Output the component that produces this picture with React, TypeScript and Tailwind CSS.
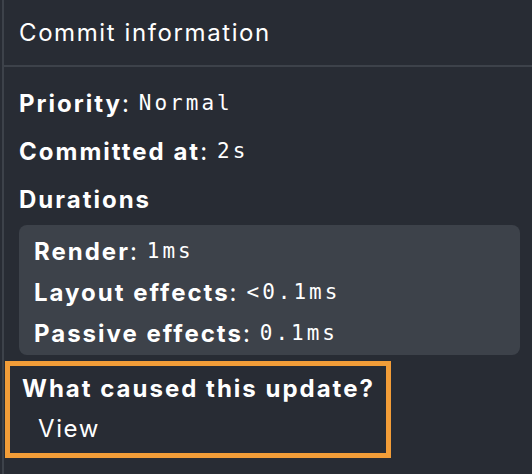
const sans = "font-['Inter','Liberation_Sans',sans-serif] tracking-[1.6px]";
const mono = "font-['DejaVu_Sans_Mono','Liberation_Mono',monospace] tracking-[3px]";
const bold = "font-bold tracking-[2px]";

function Item({ label, value }: { label: string; value: string }) {
  return (
    <div className="flex h-[41px] items-center whitespace-pre">
      <span className={bold}>{label}</span>
      <span>: </span>
      <span className={mono + " text-[21px]"}>{value}</span>
    </div>
  );
}

export default function App() {
  return (
    <div className={"h-[474px] w-[532px] overflow-hidden bg-[#282c34] pl-[2px] text-[24px] text-white " + sans}>
      <div className="h-full border-l-2 border-[#3d424a]">
        <div className="flex h-[67px] items-center border-b-2 border-[#3d424a] pl-[15px] pt-[1px]">
          Commit information
        </div>
        <div className="flex flex-col pt-[16px]">
          <div className="flex flex-col gap-[7px] pl-[15px] pr-[12px]">
            <Item label="Priority" value="Normal" />
            <Item label="Committed at" value="2s" />
            <div className={"flex h-[41px] items-center " + bold}>Durations</div>
          </div>
          <div className="ml-[15px] mr-[12px] mt-[5px] rounded-[8px] bg-[#3d424a] pb-[1px] pl-[15px] pt-[6px]">
            <Item label="Render" value="1ms" />
            <Item label="Layout effects" value="<0.1ms" />
            <Item label="Passive effects" value="0.1ms" />
          </div>
          <div className="ml-[1px] mt-[6px] w-[386px] border-[5px] border-[#f29d38] pb-[4px] pl-[12px] pt-[3px]">
            <div className={"flex h-[39px] items-center " + bold}>What caused this update?</div>
            <div className="flex h-[41px] items-center pl-[16px]">View</div>
          </div>
        </div>
      </div>
    </div>
  );
}
